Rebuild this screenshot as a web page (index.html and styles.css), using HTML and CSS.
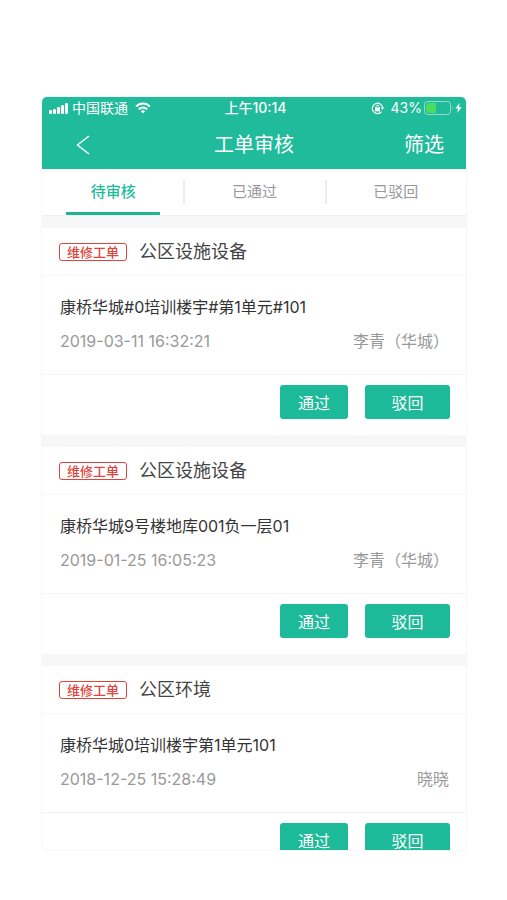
FILE: index.html
```html
<!DOCTYPE html>
<html lang="zh-CN">
<head>
    <meta charset="UTF-8">
    <meta name="viewport" content="width=device-width, initial-scale=1.0">
    <title>工单审核</title>
    <link rel="stylesheet" href="styles.css">
</head>
<body>
    <div class="phone">
        <header class="top">
            <div class="status-bar">
                <div class="status-left">
                    <svg width="20" height="12" viewBox="0 0 20 12" fill="#fff">
                        <rect x="0" y="8" width="3" height="4" rx="1.2"/>
                        <rect x="4" y="7" width="3" height="5" rx="1.2"/>
                        <rect x="8" y="5" width="3" height="7" rx="1.2"/>
                        <rect x="12" y="3" width="3" height="9" rx="1.2"/>
                        <rect x="16" y="1" width="3" height="11" rx="1.2"/>
                    </svg>
                    <span class="carrier">中国联通</span>
                    <svg width="16" height="12" viewBox="0 0 16 12" fill="none" stroke="#fff" stroke-width="2">
                        <path d="M1 4.6C5 0.5 11 0.5 15 4.6"/>
                        <path d="M3.7 7.4C6.2 4.9 9.8 4.9 12.3 7.4"/>
                        <path d="M5.8 9.2C7 8 9 8 10.2 9.2L8 11.6Z" fill="#fff" stroke="none"/>
                    </svg>
                </div>
                <div class="time">上午10:14</div>
                <div class="status-right">
                    <svg class="lock" width="13" height="13" viewBox="0 0 13 13" fill="none" stroke="#fff">
                        <path d="M10.6 9.6A5.2 5.2 0 1 1 11.7 6" stroke-width="1.2"/>
                        <path d="M9.8 5.6H13L11.5 8Z" fill="#fff" stroke="none"/>
                        <rect x="4" y="5.6" width="5" height="3.8" fill="#fff" stroke="none"/>
                        <path d="M5 6V4.6A1.5 1.5 0 0 1 8 4.6V6"/>
                    </svg>
                    <span>43%</span>
                    <svg width="29" height="14" viewBox="0 0 29 14" fill="none">
                        <rect x="0.5" y="0.5" width="26" height="13" rx="3" stroke="#8fdcc8"/>
                        <path d="M4 2H12V12H4A2 2 0 0 1 2 10V4A2 2 0 0 1 4 2Z" fill="#4cd964"/>
                        <path d="M28 5Q29.5 7 28 9Z" fill="#8fdcc8"/>
                    </svg>
                    <svg width="7" height="10" viewBox="0 0 7 10" fill="#fff">
                        <path d="M4.6 0L0.3 5.6H3L2.2 10L6.7 4.2H4Z"/>
                    </svg>
                </div>
            </div>
            <nav class="nav-bar">
                <button class="back" aria-label="返回">
                    <svg width="14" height="20" viewBox="0 0 14 20" fill="none" stroke="#fff" stroke-width="1.5">
                        <path d="M13 1L1.5 10L13 19"/>
                    </svg>
                </button>
                <h1>工单审核</h1>
                <button class="filter">筛选</button>
            </nav>
        </header>

        <div class="tabs">
            <button class="tab active">待审核</button>
            <button class="tab">已通过</button>
            <button class="tab">已驳回</button>
        </div>

        <main class="list">
            <section class="card">
                <div class="card-head">
                    <span class="tag">维修工单</span>
                    <h2>公区设施设备</h2>
                </div>
                <div class="card-body">
                    <p class="place">康桥华城#0培训楼宇#第1单元#101</p>
                    <div class="meta"><span>2019-03-11 16:32:21</span><span>李青（华城）</span></div>
                </div>
                <div class="card-foot">
                    <button class="btn">通过</button>
                    <button class="btn btn-wide">驳回</button>
                </div>
            </section>

            <section class="card">
                <div class="card-head">
                    <span class="tag">维修工单</span>
                    <h2>公区设施设备</h2>
                </div>
                <div class="card-body">
                    <p class="place">康桥华城9号楼地库001负一层01</p>
                    <div class="meta"><span>2019-01-25 16:05:23</span><span>李青（华城）</span></div>
                </div>
                <div class="card-foot">
                    <button class="btn">通过</button>
                    <button class="btn btn-wide">驳回</button>
                </div>
            </section>

            <section class="card">
                <div class="card-head">
                    <span class="tag">维修工单</span>
                    <h2>公区环境</h2>
                </div>
                <div class="card-body">
                    <p class="place">康桥华城0培训楼宇第1单元101</p>
                    <div class="meta"><span>2018-12-25 15:28:49</span><span>晓晓</span></div>
                </div>
                <div class="card-foot">
                    <button class="btn">通过</button>
                    <button class="btn btn-wide">驳回</button>
                </div>
            </section>
        </main>
    </div>
</body>
</html>
```
FILE: styles.css
```css
* {
    box-sizing: border-box;
}
body {
    margin: 0;
    height: 100vh;
    padding: 97px 41px 50px 42px;
    background: #fff;
    font-family: Inter, "Noto Sans CJK SC", sans-serif;
    color: #444;
}
h1, h2, p {
    margin: 0;
    font-weight: 400;
}
button {
    font-family: inherit;
    border: none;
    background: none;
    padding: 0;
    cursor: pointer;
}
svg {
    display: block;
}
.phone {
    height: 100%;
    overflow: hidden;
    border-radius: 5px;
    background: #f7f7f7;
    box-shadow: 0 0 0 1px #f7f7f7;
}

/* status bar + title */
.top {
    background: #1fbb9b;
    color: #fff;
}
.status-bar {
    display: grid;
    grid-template-columns: 1fr auto 1fr;
    align-items: center;
    height: 22px;
    padding: 0 4px 0 7px;
    font-size: 14px;
    line-height: 20px;
}
.status-left, .status-right {
    display: flex;
    align-items: center;
}
.status-left {
    gap: 3px;
}
.carrier {
    margin-right: 4px;
}
.time {
    font-weight: 500;
}
.status-right {
    justify-content: flex-end;
    gap: 2px;
}
.lock {
    margin-right: 5px;
}
.nav-bar {
    display: grid;
    grid-template-columns: 1fr auto 1fr;
    align-items: center;
    height: 50px;
    padding: 2px 22px 0;
}
.nav-bar h1, .filter {
    font-size: 20px;
    line-height: 30px;
}
.filter {
    justify-self: end;
    color: #fff;
}
.back {
    justify-self: start;
    padding: 0 12px;
}

/* tabs */
.tabs {
    display: grid;
    grid-template-columns: repeat(3, 1fr);
    height: 47px;
    background: #fff;
    border-bottom: 1px solid #f0f0f0;
}
.tab {
    position: relative;
    padding-left: 1px;
    color: #999;
    font-size: 15px;
    line-height: 46px;
}
.tab + .tab::before {
    content: "";
    position: absolute;
    left: 0;
    top: 11px;
    width: 2px;
    height: 24px;
    background: #ececec;
}
.tab.active {
    color: #1fbb9b;
    font-weight: 500;
}
.tab.active::after {
    content: "";
    position: absolute;
    left: 24px;
    right: 23px;
    bottom: 0;
    height: 3px;
    background: #1fb594;
}

/* work orders */
.list {
    display: flex;
    flex-direction: column;
    gap: 12px;
    padding-top: 12px;
}
.card {
    background: #fff;
}
.card-head {
    display: flex;
    align-items: center;
    gap: 12px;
    height: 48px;
    padding: 0 17px;
    border-bottom: 1px solid #f7f7f7;
}
.card-head h2 {
    font-size: 18px;
    line-height: 26px;
}
.tag {
    padding: 0 7px;
    border: 1px solid #e0433c;
    border-radius: 3px;
    color: #e0433c;
    font-size: 13px;
    font-weight: 500;
    line-height: 16px;
}
.card-body {
    padding: 19px 17px 21px 18px;
}
.place {
    color: #333;
    font-size: 16px;
    line-height: 24px;
}
.meta {
    display: flex;
    justify-content: space-between;
    margin-top: 10px;
    color: #999;
    font-size: 16px;
    line-height: 24px;
}
.card-foot {
    display: flex;
    justify-content: flex-end;
    gap: 17px;
    padding: 10px 16px 16px;
    border-top: 1px solid #f4f4f4;
}
.btn {
    width: 68px;
    height: 34px;
    border-radius: 3px;
    background: #1dba99;
    color: #fff;
    font-size: 16px;
}
.btn-wide {
    width: 85px;
}
```
